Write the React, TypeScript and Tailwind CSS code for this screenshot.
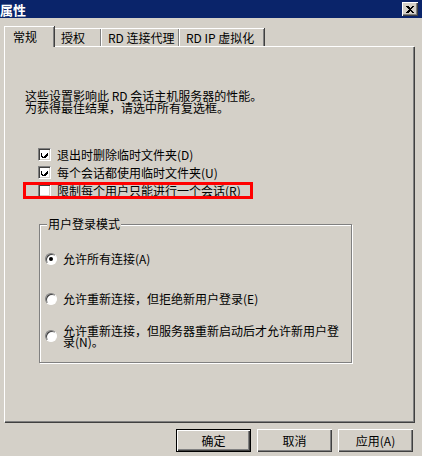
import React from "react";

const font = "font-['SimSun','Noto_Sans_CJK_SC',sans-serif]";

function Check({ checked }: { checked?: boolean }) {
  return (
    <span className="box-border flex h-[13px] w-[13px] shrink-0 items-center justify-center border border-t-[#808080] border-l-[#808080] border-b-white border-r-white bg-white shadow-[inset_1px_1px_0_#404040,inset_-1px_-1px_0_#d4d0c8]">
      {checked && (
        <svg width="7" height="7" viewBox="0 0 7 7" shapeRendering="crispEdges">
          <path d="M0 2h1v3h1v1h1v-1h1v-1h1v-1h1v-1h1v3h-1v1h-1v1h-1v1h-2v-1h-1v-1h-1z" fill="#000" />
        </svg>
      )}
    </span>
  );
}

function Radio({ checked }: { checked?: boolean }) {
  return (
    <span className="box-border flex h-[12px] w-[12px] shrink-0 items-center justify-center rounded-full border border-t-[#808080] border-l-[#808080] border-b-white border-r-white bg-white shadow-[inset_1px_1px_0_#404040]">
      {checked && <span className="h-[4px] w-[4px] rounded-full bg-black" />}
    </span>
  );
}

function Tab({ label, width, active }: { label: string; width: string; active?: boolean }) {
  return (
    <div
      className={
        (active
          ? "relative z-10 -mb-px h-[21px] pt-[3px] pl-[8px] "
          : "h-[18px] pt-[2px] pl-[6px] ") +
        width +
        " box-border flex items-start border-l border-t border-white bg-[#d4d0c8] shadow-[inset_-1px_0_0_#808080,1px_0_0_#404040]"
      }
    >
      <span className="whitespace-pre leading-[13px]">{label}</span>
    </div>
  );
}

function Button({ label, isDefault }: { label: string; isDefault?: boolean }) {
  return (
    <button
      className={
        "box-border h-[23px] w-[75px] bg-[#d4d0c8] leading-[13px] shadow-[inset_1px_1px_0_#fff,inset_-1px_-1px_0_#404040,inset_-2px_-2px_0_#808080] " +
        (isDefault ? "border border-black" : "")
      }
    >
      {label}
    </button>
  );
}

export default function App() {
  return (
    <div className={`${font} flex h-[456px] w-[422px] flex-col overflow-hidden bg-[#d4d0c8] text-[12px] text-black`}>
      <div className="flex h-[18px] shrink-0 items-center justify-between bg-[#0a246a] pr-[4px]">
        <span className="text-[13px] font-bold leading-[13px] text-white">属性</span>
        <span className="box-border flex h-[14px] w-[16px] items-center justify-center bg-[#d4d0c8] shadow-[inset_1px_1px_0_#fff,inset_-1px_-1px_0_#404040,inset_-2px_-2px_0_#808080]">
          <svg width="8" height="7" viewBox="0 0 8 7" shapeRendering="crispEdges">
            <path d="M0 0h2l2 2l2-2h2l-3 3.5l3 3.5h-2l-2-2l-2 2h-2l3-3.5z" fill="#000" />
          </svg>
        </span>
      </div>

      <div className="flex flex-col px-[4px] pt-[8px]">
        <div className="flex items-end">
          <Tab label="常规" width="w-[50px]" active />
          <Tab label="授权" width="w-[47px]" />
          <Tab label="RD 连接代理" width="w-[78px]" />
          <Tab label="RD IP 虚拟化" width="w-[85px]" />
        </div>
        <div className="box-border flex h-[376px] w-[410px] flex-col border-l border-t border-white px-[20px] pt-[43px] shadow-[inset_-1px_-1px_0_#808080,1px_1px_0_#404040]">
          <div className="leading-[12px]">这些设置影响此 RD 会话主机服务器的性能。</div>
          <div className="leading-[12px]">为获得最佳结果，请选中所有复选框。</div>

          <div className="mt-[34px] flex flex-col gap-[5px] pl-[13px]">
            <label className="flex h-[13px] items-center gap-[6px]">
              <Check checked />
              <span>退出时删除临时文件夹(D)</span>
            </label>
            <label className="flex h-[13px] items-center gap-[6px]">
              <Check checked />
              <span>每个会话都使用临时文件夹(U)</span>
            </label>
            <div className="relative">
              <label className="flex h-[13px] items-center gap-[6px]">
                <Check />
                <span>限制每个用户只能进行一个会话(R)</span>
              </label>
              <span className="absolute left-[-15px] top-[-2px] h-[17px] w-[230px] border-[3px] border-[#ff0000]" />
            </div>
          </div>

          <div className="relative ml-[14px] mt-[27px] box-border h-[139px] w-[313px] border border-[#808080] shadow-[inset_1px_1px_0_#fff,1px_1px_0_#fff]">
            <span className="absolute left-[7px] top-[-7px] bg-[#d4d0c8] px-px leading-[12px]">用户登录模式</span>
            <div className="flex flex-col pl-[5px] pt-[28px]">
              <label className="flex h-[12px] items-center gap-[6px]">
                <Radio checked />
                <span>允许所有连接(A)</span>
              </label>
              <label className="mt-[28px] flex h-[12px] items-center gap-[6px]">
                <Radio />
                <span>允许重新连接，但拒绝新用户登录(E)</span>
              </label>
              <label className="mt-[20px] flex items-center gap-[6px]">
                <Radio />
                <span className="whitespace-nowrap leading-[11px]">
                  允许重新连接，但服务器重新启动后才允许新用户登
                  <br />
                  录(N)。
                </span>
              </label>
            </div>
          </div>
        </div>
      </div>

      <div className="flex justify-end gap-[6px] pr-[9px] pt-[7px]">
        <Button label="确定" isDefault />
        <Button label="取消" />
        <Button label="应用(A)" />
      </div>
    </div>
  );
}
